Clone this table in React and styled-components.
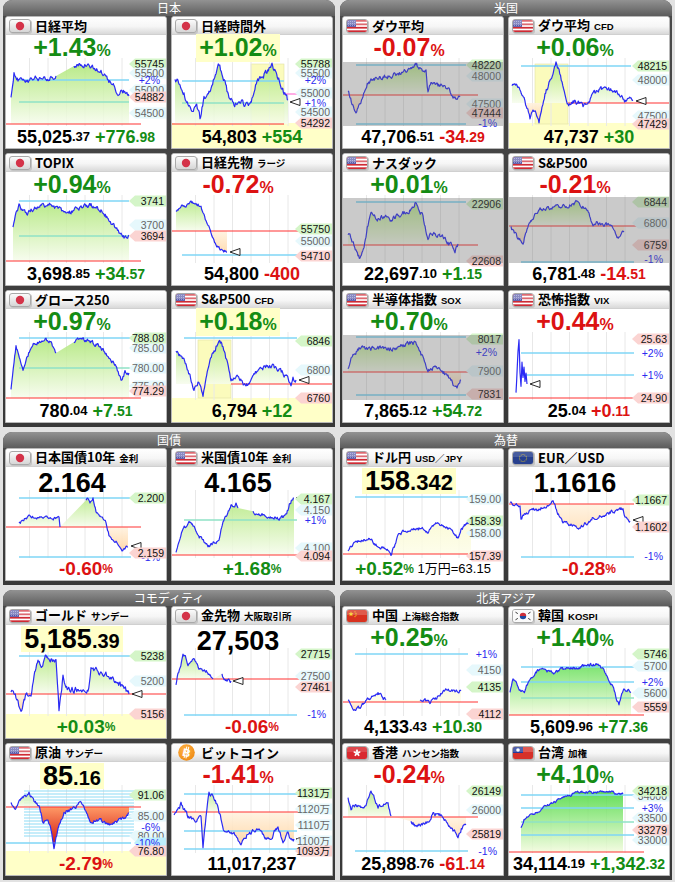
import React, { useMemo } from "react";
import styled, { createGlobalStyle } from "styled-components";

const GlobalStyle = createGlobalStyle`
  body {
    margin: 0;
    background: #e2e2e2;
    font-family: "Liberation Sans", "Noto Sans CJK JP", sans-serif;
  }
`;

const COLORS = { g: "#148c14", r: "#dc1212", k: "#000" };

// label tag styles: h = high, l = low, g = grid value, p = percent, pc = percent on cyan
const TAGS = {
  h: { bg: "#d4f5c8", fg: "#111" },
  l: { bg: "#fbd4d2", fg: "#111" },
  g: { bg: "#e6f8fc", fg: "#666" },
  p: { bg: null, fg: "#2b2bf0" },
  pc: { bg: "#bdeffc", fg: "#2b2bf0" },
};

// t = thin limit lines that sit under the fill
const LINE_COLORS = {
  c: ["#7fd6f6", 1.6],
  m: ["#8fe2c6", 1.4],
  r: ["#ff3333", 1.2],
  k: ["#ff90dc", 1.5],
  t: ["#8edcf6", 1.1],
};

const FILLS = {
  g: { up: ["#a5e468", "#f6fcec"], dn: ["#fff2e0", "#ffcf95"] },
  G: { up: ["#35d52a", "#f2fbdc"], dn: ["#fff2e0", "#ffcf95"] },
  y: { up: ["#f6f6bc", "#fdfde8"], dn: ["#fff2e0", "#ffcf95"] },
  R: { up: ["#a5e468", "#f6fcec"], dn: ["#ff9a66", "#c80000"] },
};

const GRID_X = [23.5, 42, 60.5, 79, 97.5, 116];

const oilLines = Array.from({ length: 16 }, (_, i) => [6 + i * 3, "t", 18, 128]);

const pct = (v, c) => [[v, 25, c], ["%", 16, c]];
const pctSm = (v, c) => [[v, 19, c], ["%", 12, c]];

const japan = [
  {
    flag: "jp", name: "日経平均",
    top: pct("+1.43", "g"),
    bot: [["55,025", 18, "k"], [".37", 13, "k"], [" +776", 18, "g"], [".98", 14, "g"]],
    chart: {
      base: 66, fill: "g", noise: 4,
      lines: [[22, "c", 13, 123], [44, "m", 13, 123], [66, "r", 0, 135]],
      pts: [[5, 39], [8, 15], [12, 22], [20, 24], [30, 20], [40, 21], [50, 18], null, [68, 8], [75, 6], [85, 8], [95, 12], [100, 20], [108, 28], [112, 35], [118, 33], [123, 38]],
      labels: [[6, "55745", "h"], [15, "55500", "g"], [22, "+2%", "p"], [32, "55000", "g"], [39, "54882", "l"], [55, "54500", "g"]],
    },
  },
  {
    flag: "jp", name: "日経時間外", topHl: true, botHl: true,
    top: pct("+1.02", "g"),
    bot: [["54,803", 18, "k"], [" +554", 18, "g"]],
    chart: {
      base: 66, fill: "g", noise: 5, yb: 65, bands: [[79, 112, 6, 66]], mk: [118, 44],
      lines: [[23, "c", 10, 112], [45, "m", 10, 112], [66, "r", 0, 112], [36, "k", 112, 162]],
      pts: [[3, 22], [8, 25], [14, 40], [20, 57], [24, 45], [28, 60], [32, 40], [37, 35], [42, 20], [47, 6], [50, 15], [53, 25], [57, 40], [62, 45], [70, 44], [75, 48], [80, 40], [85, 22], [90, 18], [95, 14], [100, 8], [104, 15], [108, 25], [112, 35], [116, 42]],
      labels: [[6, "55788", "h"], [15, "55500", "g"], [22, "+2%", "p"], [35, "55000", "g"], [45, "+1%", "p"], [54, "54500", "g"], [65, "54292", "l"]],
    },
  },
  {
    flag: "jp", name: "TOPIX",
    top: pct("+0.94", "g"),
    bot: [["3,698", 18, "k"], [".85", 13, "k"], [" +34", 18, "g"], [".57", 14, "g"]],
    chart: {
      base: 66, fill: "g", noise: 4,
      lines: [[6, "c", 13, 123], [41, "m", 13, 123], [66, "r", 0, 135]],
      pts: [[7, 31], [10, 18], [13, 10], [20, 18], [30, 13], [45, 10], [55, 15], [65, 17], [75, 12], [85, 10], [95, 15], [105, 27], [113, 37], [118, 43], [123, 40]],
      labels: [[6, "3741", "h"], [30, "3700", "g"], [41, "3694", "l"]],
    },
  },
  {
    flag: "jp", name: "日経先物", sub: "ラージ",
    top: pct("-0.72", "r"),
    bot: [["54,800", 18, "k"], [" -400", 18, "r"]],
    chart: {
      base: 36, fill: "g", noise: 3, mk: [58, 57],
      lines: [[36, "r", 0, 162], [60, "c", 10, 125]],
      pts: [[4, 17], [9, 12], [14, 10], [19, 8], [24, 7], [29, 12], [34, 27], [39, 37], [44, 50], [49, 55], [55, 57]],
      labels: [[34, "55750", "h"], [46, "55000", "g"], [61, "54710", "l"]],
    },
  },
  {
    flag: "jp", name: "グロース250",
    top: pct("+0.97", "g"),
    bot: [["780", 18, "k"], [".04", 13, "k"], [" +7", 18, "g"], [".51", 14, "g"]],
    chart: {
      base: 66, fill: "g", noise: 3.5,
      lines: [[6, "c", 13, 128], [36, "m", 13, 128], [66, "r", 0, 135]],
      pts: [[5, 58], [8, 30], [10, 15], [14, 25], [17, 38], [20, 28], [24, 18], [28, 11], [35, 10], [40, 8], [45, 10], [50, 21], null, [68, 11], [73, 8], [78, 8], [85, 10], [95, 15], [100, 22], [105, 28], [110, 35], [115, 48], [119, 40], [123, 41]],
      labels: [[16, "785.00", "g"], [36, "780.00", "g"], [54, "775.00", "g"], [6, "788.08", "h"], [59, "774.29", "l"]],
    },
  },
  {
    flag: "us", name: "S&P500", sub: "CFD", topHl: true, botHl: true,
    top: pct("+0.18", "g"),
    bot: [["6,794", 18, "k"], [" +12", 18, "g"]],
    chart: {
      base: 52, fill: "g", noise: 4, yb: 66, bands: [[26, 59, 8, 66]], mk: [127, 48],
      lines: [[6, "c", 12, 125], [52, "r", 59, 162]],
      pts: [[4, 21], [9, 25], [14, 31], [18, 45], [22, 58], [26, 50], [31, 63], [34, 45], [38, 25], [42, 20], [47, 8], [51, 15], [55, 30], [59, 48], [63, 45], [68, 47], [74, 55], [78, 48], [82, 40], [90, 37], [99, 33], [105, 37], [110, 40], [115, 46], [119, 55], [121, 48], [124, 48]],
      labels: [[9, "6846", "h"], [38, "6800", "g"], [66, "6760", "l"]],
    },
  },
];

const usa = [
  {
    flag: "us", name: "ダウ平均",
    top: pct("-0.07", "r"),
    bot: [["47,706", 18, "k"], [".51", 13, "k"], [" -34", 18, "r"], [".29", 14, "r"]],
    chart: {
      base: 37, fill: "g", noise: 4, gray: [4, 68],
      lines: [[7, "c", 13, 123], [66, "c", 13, 123], [37, "r", 0, 135]],
      pts: [[5, 35], [9, 45], [13, 52], [17, 45], [20, 40], [25, 25], [28, 22], [35, 20], [45, 18], [55, 16], [65, 12], [73, 6], [78, 12], [83, 14], [85, 34], [88, 26], [95, 28], [100, 27], [105, 30], [108, 37], [112, 40], [117, 39]],
      labels: [[18, "48000", "g"], [46, "47500", "g"], [7, "48220", "h"], [55, "47444", "l"], [65, "-1%", "p"]],
    },
  },
  {
    flag: "us", name: "ダウ平均", sub: "CFD", botHl: true,
    top: pct("+0.06", "g"),
    bot: [["47,737", 18, "k"], [" +30", 18, "g"]],
    chart: {
      base: 45, fill: "g", noise: 4, yb: 65, bands: [[26, 59, 6, 66]], mk: [127, 43],
      lines: [[8, "c", 12, 122], [45, "r", 59, 162]],
      pts: [[3, 29], [8, 28], [13, 35], [18, 50], [21, 60], [24, 50], [27, 55], [30, 66], [33, 50], [36, 35], [40, 25], [44, 18], [47, 6], [50, 12], [53, 25], [56, 40], [59, 47], [64, 43], [70, 45], [74, 48], [80, 42], [86, 35], [92, 32], [99, 30], [105, 33], [112, 38], [117, 44], [120, 42], [124, 42]],
      labels: [[22, "48000", "g"], [58, "47500", "g"], [8, "48215", "h"], [66, "47429", "l"]],
    },
  },
  {
    flag: "us", name: "ナスダック",
    top: pct("+0.01", "g"),
    bot: [["22,697", 18, "k"], [".10", 13, "k"], [" +1", 18, "g"], [".15", 14, "g"]],
    chart: {
      base: 50, fill: "g", noise: 4, gray: [3, 68],
      lines: [[7, "c", 13, 123], [50, "r", 0, 135]],
      pts: [[5, 38], [9, 45], [13, 55], [17, 65], [21, 50], [25, 30], [28, 20], [35, 24], [42, 22], [48, 25], [55, 20], [62, 18], [68, 14], [72, 8], [76, 15], [80, 22], [85, 45], [88, 38], [95, 40], [100, 42], [105, 48], [110, 52], [112, 56], [115, 49]],
      labels: [[9, "22906", "h"], [66, "22608", "l"]],
    },
  },
  {
    flag: "us", name: "S&P500",
    top: pct("-0.21", "r"),
    bot: [["6,781", 18, "k"], [".48", 13, "k"], [" -14", 18, "r"], [".51", 14, "r"]],
    chart: {
      base: 31, fill: "g", noise: 3.5, gray: [2, 68],
      lines: [[31, "r", 0, 162], [67, "c", 12, 125]],
      pts: [[2, 33], [6, 38], [10, 45], [14, 48], [18, 35], [21, 27], [25, 20], [29, 15], [40, 14], [50, 12], [60, 10], [69, 7], [75, 12], [80, 18], [84, 32], [88, 28], [95, 30], [102, 30], [105, 35], [108, 42], [112, 40], [115, 37]],
      labels: [[28, "6800", "g"], [7, "6844", "h"], [50, "6759", "l"], [64, "-1%", "p"]],
    },
  },
  {
    flag: "us", name: "半導体指数", sub: "SOX",
    top: pct("+0.70", "g"),
    bot: [["7,865", 18, "k"], [".12", 13, "k"], [" +54", 18, "g"], [".72", 14, "g"]],
    chart: {
      base: 40, fill: "g", noise: 4, gray: [3, 68],
      lines: [[5, "c", 13, 123], [40, "r", 0, 135], [63, "c", 13, 123]],
      pts: [[5, 35], [8, 28], [12, 20], [18, 16], [25, 18], [32, 15], [40, 17], [50, 16], [60, 13], [68, 10], [72, 12], [78, 22], [85, 38], [92, 34], [98, 38], [105, 45], [110, 52], [114, 55], [118, 48]],
      labels: [[39, "7900", "g"], [20, "+2%", "p"], [7, "8017", "h"], [62, "7831", "l"]],
    },
  },
  {
    flag: "us", name: "恐怖指数", sub: "VIX",
    top: pct("+0.44", "r"),
    bot: [["25", 18, "k"], [".04", 13, "k"], [" +0", 18, "r"], [".11", 14, "r"]],
    chart: {
      base: 66, fill: "none", noise: 2, mk: [21, 52],
      lines: [[21, "c", 12, 125], [43, "c", 12, 125], [66, "r", 0, 162]],
      pts: [[7, 60], [9, 20], [10, 8], [11, 40], [12, 55], [13, 30], [14, 45], [15, 35], [16, 50], [17, 42], [18, 52]],
      labels: [[21, "+2%", "p"], [43, "+1%", "p"], [7, "25.63", "l"], [66, "24.90", "l"]],
    },
  },
];

const bonds = [
  {
    flag: "jp", name: "日本国債10年", sub: "金利",
    top: [["2.164", 27, "k"]],
    bot: pctSm("-0.60", "r"),
    chart: {
      base: 37, fill: "g", noise: 2.5, mk: [125, 56],
      lines: [[8, "c", 13, 125], [37, "r", 0, 135], [67, "c", 13, 125]],
      pts: [[13, 33], [17, 30], [22, 27], [25, 26], [30, 28], [38, 28], [45, 29], [53, 28], [54, 37], null, [80, 10], [82, 8], [84, 12], [87, 8], [90, 22], [95, 27], [100, 32], [103, 45], [107, 50], [110, 52], [113, 58], [116, 60], [120, 57], [122, 57]],
      labels: [[67, "-1%", "p"], [8, "2.200", "h"], [63, "2.159", "l"]],
    },
  },
  {
    flag: "us", name: "米国債10年", sub: "金利",
    top: [["4.165", 27, "k"]],
    bot: pctSm("+1.68", "g"),
    chart: {
      base: 65, fill: "g", noise: 3, mk: [124, 8],
      lines: [[30, "m", 12, 125], [65, "r", 0, 162]],
      pts: [[4, 63], [8, 50], [11, 38], [15, 35], [19, 31], [23, 38], [26, 44], [30, 50], [36, 56], [42, 53], [47, 51], [49, 40], [51, 31], [55, 25], [59, 16], [62, 15], [64, 13], [66, 18], null, [81, 22], [86, 24], [92, 25], [97, 29], [102, 27], [106, 28], [110, 27], [114, 25], [116, 20], [118, 13], [122, 8]],
      labels: [[20, "4.150", "g"], [58, "4.100", "g"], [30, "+1%", "p"], [9, "4.167", "h"], [66, "4.094", "l"]],
    },
  },
];

const fx = [
  {
    flag: "us", name: "ドル円", sub: "USD／JPY", topHl: true,
    top: [["158", 27, "k"], [".342", 22, "k"]],
    bot: [["+0.52", 19, "g"], ["%", 12, "g"], [" 1万円=63.15", 13, "k", 400]],
    chart: {
      base: 64, fill: "y", noise: 3, mk: [127, 30],
      lines: [[7, "c", 12, 125], [64, "r", 0, 125]],
      pts: [[5, 60], [10, 54], [15, 51], [20, 50], [25, 48], [30, 52], [35, 56], [40, 58], [45, 60], [48, 64], [52, 55], [55, 44], [60, 42], [65, 41], [72, 40], [78, 38], [82, 39], [85, 44], [88, 38], [92, 33], [98, 35], [105, 38], [110, 42], [115, 49], [118, 40], [122, 35], [125, 33], [128, 30]],
      labels: [[9, "159.00", "g"], [43, "158.00", "g"], [31, "158.39", "h"], [66, "157.39", "l"]],
    },
  },
  {
    flag: "eu", name: "EUR／USD",
    top: [["1.1616", 27, "k"]],
    bot: pctSm("-0.28", "r"),
    chart: {
      base: 14, fill: "g", noise: 3, mk: [124, 30],
      lines: [[14, "r", 0, 125], [67, "c", 12, 125]],
      pts: [[1, 14], [6, 15], [11, 17], [12, 29], [16, 25], [21, 20], [28, 20], [34, 17], [40, 15], [44, 9], [48, 22], [54, 32], [62, 35], [71, 37], [78, 33], [84, 28], [92, 26], [104, 21], [110, 20], [114, 18], [116, 28], [121, 31]],
      labels: [[10, "1.1667", "h"], [37, "1.1602", "l"], [66, "-1%", "p"]],
    },
  },
];

const commodity = [
  {
    flag: "us", name: "ゴールド", sub: "サンデー", topHl: true, botHl: true,
    top: [["5,185", 27, "k"], [".39", 20, "k"]],
    bot: pctSm("+0.03", "g"),
    chart: {
      base: 46, fill: "g", noise: 5, yb: 66, mk: [126, 46],
      lines: [[8, "c", 13, 125], [46, "r", 0, 162]],
      pts: [[5, 43], [8, 45], [12, 55], [15, 66], [18, 50], [22, 45], [25, 49], [28, 30], [32, 13], [36, 20], [40, 8], [45, 12], [50, 10], [53, 62], [57, 30], [62, 40], [68, 42], [75, 40], [82, 43], [85, 20], [92, 23], [102, 27], [108, 32], [112, 35], [118, 40], [123, 46]],
      labels: [[33, "5200", "g"], [8, "5238", "h"], [66, "5156", "l"]],
    },
  },
  {
    flag: "jp", name: "金先物", sub: "大阪取引所",
    top: [["27,503", 27, "k"]],
    bot: pctSm("-0.06", "r"),
    chart: {
      base: 31, fill: "g", noise: 3, mk: [61, 33],
      lines: [[31, "r", 0, 162], [67, "c", 12, 125]],
      pts: [[4, 38], [6, 25], [8, 20], [11, 7], [14, 10], [16, 15], [21, 10], [25, 18], [29, 23], [33, 22], [37, 25], [41, 31], null, [50, 26], [52, 33], [55, 32], [59, 33]],
      labels: [[28, "27500", "g"], [6, "27715", "h"], [39, "27461", "l"], [66, "-1%", "p"]],
    },
  },
  {
    flag: "us", name: "原油", sub: "サンデー", topHl: true, botHl: true,
    top: [["85", 27, "k"], [".16", 20, "k"]],
    bot: pctSm("-2.79", "r"),
    chart: {
      base: 22, fill: "R", noise: 3, yb: 66, mk: [125, 30],
      lines: [...oilLines, [22, "r", 0, 135], [58, "c", 0, 125]],
      pts: [[5, 18], [10, 23], [15, 13], [20, 12], [23, 8], [28, 16], [33, 21], [37, 38], [42, 34], [45, 45], [48, 64], [52, 44], [55, 35], [58, 27], [63, 25], [67, 22], [72, 20], [75, 17], [78, 22], [80, 28], [85, 38], [90, 35], [95, 35], [100, 38], [105, 40], [110, 37], [113, 35], [118, 33], [123, 28]],
      labels: [[31, "85.00", "g"], [51, "80.00", "g"], [42, "-6%", "p"], [58, "-10%", "pc"], [10, "91.06", "h"], [66, "76.80", "l"]],
    },
  },
  {
    flag: "btc", name: "ビットコイン",
    top: pct("-1.41", "r"),
    bot: [["11,017,237", 18, "k"]],
    chart: {
      base: 27, fill: "g", noise: 4, mk: [124, 54],
      lines: [[9, "c", 12, 125], [27, "r", 0, 135], [46, "c", 12, 125], [64, "c", 12, 125]],
      pts: [[2, 29], [9, 19], [16, 31], [24, 39], [29, 32], [31, 63], [34, 34], [37, 7], [42, 12], [47, 27], [52, 44], [62, 48], [69, 58], [77, 48], [87, 44], [96, 54], [101, 50], [106, 41], [111, 58], [116, 49], [122, 54]],
      labels: [[24, "1120万", "g"], [40, "1110万", "g"], [56, "1100万", "g"], [8, "1131万", "h"], [66, "1093万", "l"]],
    },
  },
];

const asia = [
  {
    flag: "cn", name: "中国", sub: "上海総合指数",
    top: pct("+0.25", "g"),
    bot: [["4,133", 18, "k"], [".43", 13, "k"], [" +10", 18, "g"], [".30", 14, "g"]],
    chart: {
      base: 54, fill: "y", noise: 3,
      lines: [[6, "c", 12, 125], [54, "r", 0, 135]],
      pts: [[5, 53], [9, 58], [12, 63], [16, 60], [20, 56], [24, 52], [28, 49], [32, 47], [35, 45], [39, 49], [43, 52], null, [77, 51], [82, 52], [87, 54], [91, 52], [95, 49], [99, 45], [102, 42], [106, 43], [110, 42], [114, 43], [118, 42]],
      labels: [[22, "4150", "g"], [6, "+1%", "p"], [39, "4135", "h"], [66, "4112", "l"]],
    },
  },
  {
    flag: "kr", name: "韓国", sub: "KOSPI",
    top: pct("+1.40", "g"),
    bot: [["5,609", 18, "k"], [".96", 13, "k"], [" +77", 18, "g"], [".36", 14, "g"]],
    chart: {
      base: 67, fill: "G", noise: 3,
      lines: [[19, "c", 12, 125], [34, "c", 12, 125], [50, "m", 12, 125], [67, "r", 0, 135]],
      pts: [[1, 43], [4, 30], [7, 35], [9, 40], [13, 42], [16, 43], [19, 35], [21, 30], [26, 25], [32, 21], [38, 23], [44, 25], [52, 22], [61, 20], [70, 19], [77, 18], [83, 17], [87, 16], [91, 18], [94, 21], [98, 28], [101, 33], [104, 40], [106, 45], [108, 52], [110, 58], [112, 48], [115, 40], [118, 42], [122, 44]],
      labels: [[18, "5700", "g"], [45, "5600", "g"], [34, "+2%", "p"], [6, "5746", "h"], [59, "5559", "l"]],
    },
  },
  {
    flag: "hk", name: "香港", sub: "ハンセン指数",
    top: pct("-0.24", "r"),
    bot: [["25,898", 18, "k"], [".76", 13, "k"], [" -61", 18, "r"], [".14", 14, "r"]],
    chart: {
      base: 32, fill: "g", noise: 3.5,
      lines: [[32, "r", 0, 135], [66, "c", 12, 125]],
      pts: [[5, 13], [8, 26], [10, 20], [13, 19], [17, 23], [21, 21], [25, 15], [28, 8], [32, 15], [35, 21], [40, 20], [45, 19], [48, 31], null, [68, 35], [72, 41], [78, 40], [85, 38], [88, 32], [90, 28], [94, 30], [98, 31], [102, 35], [105, 39], [110, 45], [115, 51], [119, 43], [123, 39]],
      labels: [[25, "26000", "g"], [6, "26149", "h"], [49, "25819", "l"], [66, "-1%", "p"]],
    },
  },
  {
    flag: "tw", name: "台湾", sub: "加権",
    top: pct("+4.10", "g"),
    bot: [["34,114", 18, "k"], [".19", 13, "k"], [" +1,342", 18, "g"], [".32", 14, "g"]],
    chart: {
      base: 67, fill: "G", noise: 2,
      lines: [[10, "c", 12, 125], [23, "c", 12, 125], [37, "m", 12, 125], [50, "c", 12, 125], [67, "r", 0, 135]],
      pts: [[12, 42], [15, 35], [20, 30], [25, 28], [31, 27], [35, 22], [40, 20], [48, 16], [55, 12], [62, 10], [67, 6], [75, 7], [89, 7], [104, 6], [106, 9], [114, 9]],
      labels: [[11, "34000", "g"], [33, "33500", "g"], [55, "33000", "g"], [23, "+3%", "p"], [6, "34218", "h"], [45, "33279", "l"]],
    },
  },
];

const sections = [
  { title: "日本", tiles: japan },
  { title: "米国", tiles: usa },
  { title: "国債", tiles: bonds },
  { title: "為替", tiles: fx },
  { title: "コモディティ", tiles: commodity },
  { title: "北東アジア", tiles: asia },
];

function mulberry32(a) {
  return function () {
    a |= 0;
    a = (a + 0x6d2b79f5) | 0;
    let t = Math.imul(a ^ (a >>> 15), 1 | a);
    t = (t + Math.imul(t ^ (t >>> 7), 61 | t)) ^ t;
    return ((t ^ (t >>> 14)) >>> 0) / 4294967296;
  };
}

// turn anchor points into a jagged intraday line, split where the market paused
function buildSeries(pts, noise, seed) {
  const rnd = mulberry32(seed);
  const segs = [];
  let cur = [];
  pts.forEach((p) => {
    if (p === null) {
      if (cur.length) segs.push(cur);
      cur = [];
    } else cur.push(p);
  });
  if (cur.length) segs.push(cur);
  return segs.map((seg) => {
    const out = [];
    let n = 0;
    for (let i = 0; i < seg.length - 1; i++) {
      const [x0, y0] = seg[i];
      const [x1, y1] = seg[i + 1];
      const steps = Math.max(1, Math.round((x1 - x0) / 0.7));
      for (let s = 0; s < steps; s++) {
        const t = s / steps;
        n = n * 0.55 + (rnd() - 0.5) * noise;
        const y = Math.min(67.5, Math.max(0.5, y0 + (y1 - y0) * t + n));
        out.push([x0 + (x1 - x0) * t, y]);
      }
    }
    out.push(seg[seg.length - 1]);
    return out;
  });
}

const f = (v) => v.toFixed(1);

const Page = styled.div`
  display: grid;
  grid-template-columns: 1fr 1fr;
  column-gap: 5px;
  row-gap: 5px;
  padding: 0 3px;
`;

const Section = styled.section`
  background: linear-gradient(#4a4a4a, #383838);
  border-radius: 9px 9px 0 0;
  padding: 0 2px 4px;
`;

const SectionTitle = styled.div`
  height: 16px;
  margin: 0 -2px;
  border-radius: 9px 9px 0 0;
  background: linear-gradient(#929292, #5c5c5c);
  color: #fff;
  font-family: "Noto Sans CJK JP", sans-serif;
  font-size: 12px;
  line-height: 15px;
  text-align: center;
`;

const TileGrid = styled.div`
  display: grid;
  grid-template-columns: 1fr 1fr;
  gap: 4px;
`;

const Tile = styled.div`
  height: 133px;
  box-sizing: border-box;
  display: flex;
  flex-direction: column;
  background: #fff;
  border: 1px solid #b8b8b8;
  border-radius: 3px 3px 0 0;
  overflow: hidden;
`;

const TileHead = styled.div`
  flex: none;
  height: 18px;
  box-sizing: border-box;
  display: flex;
  align-items: center;
  gap: 4px;
  padding-left: 3px;
  background: linear-gradient(#ffffff 0%, #f6f6f6 55%, #d9d9d9 100%);
  border-bottom: 1px solid #d0d0d0;
`;

const FlagBox = styled.span`
  flex: none;
  width: 22px;
  height: 14px;
  box-sizing: border-box;
  border: 1px solid #a9a9a9;
  border-radius: 3px;
  overflow: hidden;
  background: linear-gradient(#fbfbfb, #d6d6d6);
  box-shadow: 1px 1px 0 #c4c4c4;
  svg {
    display: block;
  }
`;

const CoinBox = styled.span`
  flex: none;
  width: 22px;
  height: 17px;
  display: flex;
  justify-content: center;
  align-items: center;
`;

const Name = styled.span`
  font-family: "Noto Sans CJK JP", sans-serif;
  font-weight: 700;
  font-size: 13px;
  line-height: 17px;
  color: #000;
  white-space: nowrap;
`;

const Sub = styled.span`
  margin-left: 4px;
  font-family: "Liberation Sans", "Noto Sans CJK JP", sans-serif;
  font-weight: 700;
  font-size: 9.5px;
`;

const TopRow = styled.div`
  flex: none;
  position: relative;
  z-index: 2;
  height: 23px;
  display: flex;
  align-items: flex-end;
  justify-content: center;
  padding-right: 28px;
`;

const TopValue = styled.span`
  display: block;
  font-size: ${(p) => p.$size}px;
  line-height: 20px;
  margin-bottom: -4px;
  padding: 3px 3px 1px;
  background: ${(p) => (p.$hl ? "#ffffc8" : "transparent")};
  white-space: nowrap;
`;

const Num = styled.span`
  font-family: "Liberation Sans", "Noto Sans CJK JP", sans-serif;
  font-weight: ${(p) => p.$w || 700};
  font-size: ${(p) => p.$size}px;
  color: ${(p) => COLORS[p.$color]};
  white-space: pre;
`;

const BottomRow = styled.div`
  flex: none;
  height: 22px;
  display: flex;
  align-items: center;
  justify-content: center;
  line-height: 22px;
  white-space: nowrap;
  background: ${(p) => (p.$hl ? "#ffffc8" : "transparent")};
`;

const ChartSvg = styled.svg`
  display: block;
  flex: none;
  position: relative;
  z-index: 1;
  overflow: visible;
  width: 100%;
  height: 68px;
  text {
    font-family: "Liberation Sans", "Noto Sans CJK JP", sans-serif;
    font-size: 10.5px;
  }
`;

function Flag({ kind }) {
  if (kind === "btc") {
    return (
      <CoinBox>
        <svg width="17" height="17" viewBox="0 0 17 17">
          <defs>
            <radialGradient id="btcg" cx="40%" cy="35%" r="70%">
              <stop offset="0" stopColor="#ffb347" />
              <stop offset="1" stopColor="#ee8a12" />
            </radialGradient>
          </defs>
          <circle cx="8.5" cy="8.5" r="8.3" fill="url(#btcg)" />
          <g transform="rotate(14 8.5 8.5)">
            <line x1="7.4" y1="2.6" x2="7.4" y2="14.4" stroke="#fff" strokeWidth="1" />
            <line x1="9.4" y1="2.6" x2="9.4" y2="14.4" stroke="#fff" strokeWidth="1" />
            <text x="8.6" y="12.6" textAnchor="middle" fill="#fff" fontSize="11" fontWeight="700" fontFamily="Liberation Sans, sans-serif">B</text>
          </g>
        </svg>
      </CoinBox>
    );
  }
  let body = null;
  if (kind === "jp") {
    body = <circle cx="10" cy="6" r="4.2" fill="#d43349" />;
  } else if (kind === "us") {
    body = (
      <>
        <rect width="20" height="12" fill="#fff" />
        {[0, 2, 4, 6].map((i) => (
          <rect key={i} y={i * 1.72} width="20" height="1.72" fill="#cf2a34" />
        ))}
        <rect width="9" height="6.9" fill="#5658a8" />
        {[1.5, 3.5, 5.5].map((y) =>
          [1.5, 3.5, 5.5, 7.5].map((x) => <circle key={`${x}-${y}`} cx={x} cy={y} r="0.45" fill="#d8dcff" />)
        )}
        <rect width="20" height="5" fill="#fff" opacity="0.3" />
      </>
    );
  } else if (kind === "eu") {
    body = (
      <>
        <rect width="20" height="12" fill="#27408e" />
        {Array.from({ length: 12 }, (_, i) => {
          const a = (i / 12) * Math.PI * 2;
          return <circle key={i} cx={10 + Math.cos(a) * 3.6} cy={6 + Math.sin(a) * 3.6} r="0.5" fill="#e8c820" />;
        })}
        <rect width="20" height="5" fill="#fff" opacity="0.15" />
      </>
    );
  } else if (kind === "cn") {
    body = (
      <>
        <rect width="20" height="12" fill="#d8321f" />
        <polygon points="4,1.3 4.7,3.2 6.6,3.2 5.1,4.4 5.6,6.3 4,5.2 2.4,6.3 2.9,4.4 1.4,3.2 3.3,3.2" fill="#f7d417" />
        <circle cx="8" cy="1.8" r="0.6" fill="#f7d417" />
        <circle cx="9" cy="3.3" r="0.6" fill="#f7d417" />
        <circle cx="9" cy="5.2" r="0.6" fill="#f7d417" />
        <circle cx="8" cy="6.6" r="0.6" fill="#f7d417" />
        <rect width="20" height="5" fill="#fff" opacity="0.2" />
      </>
    );
  } else if (kind === "kr") {
    body = (
      <>
        <rect width="20" height="12" fill="#fafafa" />
        <path d="M6.8,6 A3.2,3.2 0 0 1 13.2,6 Z" fill="#cd2e3a" />
        <path d="M6.8,6 A3.2,3.2 0 0 0 13.2,6 Z" fill="#1d4aa0" />
        <g stroke="#222" strokeWidth="0.9">
          <line x1="2.5" y1="2.2" x2="4.8" y2="3.6" />
          <line x1="15.2" y1="3.6" x2="17.5" y2="2.2" />
          <line x1="2.5" y1="9.8" x2="4.8" y2="8.4" />
          <line x1="15.2" y1="8.4" x2="17.5" y2="9.8" />
        </g>
      </>
    );
  } else if (kind === "hk") {
    body = (
      <>
        <rect width="20" height="12" fill="#d92a30" />
        {[0, 72, 144, 216, 288].map((r) => (
          <ellipse key={r} cx="10" cy="4.1" rx="1" ry="1.9" fill="#fff" transform={`rotate(${r} 10 6)`} />
        ))}
        <rect width="20" height="5" fill="#fff" opacity="0.15" />
      </>
    );
  } else if (kind === "tw") {
    body = (
      <>
        <rect width="20" height="12" fill="#d63028" />
        <rect width="10" height="6" fill="#223b9a" />
        <circle cx="5" cy="3" r="1.8" fill="#fff" />
        <rect width="20" height="5" fill="#fff" opacity="0.2" />
      </>
    );
  }
  return (
    <FlagBox>
      <svg width="20" height="12" viewBox="0 0 20 12">
        {body}
      </svg>
    </FlagBox>
  );
}

function HLine({ l }) {
  const [y, k, x0, x1] = l;
  return <line x1={x0} y1={y} x2={x1} y2={y} stroke={LINE_COLORS[k][0]} strokeWidth={LINE_COLORS[k][1]} />;
}

function Chart({ c, id }) {
  const segs = useMemo(() => buildSeries(c.pts, c.noise, id * 7919 + 13), [c, id]);
  const all = segs.flat();
  const first = all[0];
  const last = all[all.length - 1];
  const area =
    `M${f(first[0])},${c.base} ` +
    all.map(([x, y]) => `L${f(x)},${f(y)}`).join(" ") +
    ` L${f(last[0])},${c.base} Z`;
  const stroke = segs
    .map((s) => s.map(([x, y], i) => `${i ? "L" : "M"}${f(x)},${f(y)}`).join(" "))
    .join(" ");
  const fill = FILLS[c.fill];
  const upId = `up${id}`;
  const dnId = `dn${id}`;
  const caId = `ca${id}`;
  const cbId = `cb${id}`;
  const under = c.lines.filter((l) => l[1] === "t");
  const over = c.lines.filter((l) => l[1] !== "t");

  return (
    <ChartSvg viewBox="0 0 160 68" preserveAspectRatio="none">
      {fill && (
        <defs>
          <linearGradient id={upId} gradientUnits="userSpaceOnUse" x1="0" y1="0" x2="0" y2={c.base}>
            <stop offset="0" stopColor={fill.up[0]} />
            <stop offset="1" stopColor={fill.up[1]} />
          </linearGradient>
          <linearGradient id={dnId} gradientUnits="userSpaceOnUse" x1="0" y1={c.base} x2="0" y2="66">
            <stop offset="0" stopColor={fill.dn[0]} />
            <stop offset="1" stopColor={fill.dn[1]} />
          </linearGradient>
          <clipPath id={caId}>
            <rect x="0" y="0" width="160" height={c.base} />
          </clipPath>
          <clipPath id={cbId}>
            <rect x="0" y={c.base} width="160" height={68 - c.base} />
          </clipPath>
        </defs>
      )}
      {c.yb != null && <rect x="0" y={c.yb} width="160" height={68 - c.yb} fill="#ffffc8" />}
      {(c.bands || []).map(([x0, x1, y0, y1], i) => (
        <rect key={i} x={x0} y={y0} width={x1 - x0} height={y1 - y0} fill="#fbfbbc" stroke="#e2e2a4" strokeWidth="0.6" />
      ))}
      {GRID_X.map((x) => (
        <line key={x} x1={x} y1="0" x2={x} y2="68" stroke="#e8e8e8" strokeWidth="1" />
      ))}
      {under.map((l, i) => (
        <HLine key={`u${i}`} l={l} />
      ))}
      {fill && (
        <>
          <path d={area} fill={`url(#${upId})`} fillOpacity="0.85" clipPath={`url(#${caId})`} />
          <path d={area} fill={`url(#${dnId})`} fillOpacity={c.fill === "R" ? 1 : 0.9} clipPath={`url(#${cbId})`} />
        </>
      )}
      {over.map((l, i) => (
        <HLine key={`o${i}`} l={l} />
      ))}
      <path d={stroke} fill="none" stroke="#2a2af5" strokeWidth="1.2" strokeLinejoin="round" />
      {c.mk && (
        <path
          d={`M${c.mk[0]},${c.mk[1]} L${c.mk[0] + 10},${c.mk[1] - 3.5} L${c.mk[0] + 10},${c.mk[1] + 3.5} Z`}
          fill="#fff"
          stroke="#111"
          strokeWidth="0.9"
        />
      )}
      {c.labels.map(([y, text, k], i) => {
        const s = TAGS[k];
        const isPct = k === "p" || k === "pc";
        return (
          <g key={i}>
            {s.bg && (
              <path
                d={`M${isPct ? 128 : 123},${y} L${isPct ? 133 : 129},${y - 5.5} L160,${y - 5.5} L160,${y + 5.5} L${isPct ? 133 : 129},${y + 5.5} Z`}
                fill={s.bg}
              />
            )}
            <text x={isPct ? 154 : 158} y={y} dy="0.36em" textAnchor="end" fill={s.fg}>
              {text}
            </text>
          </g>
        );
      })}
      {c.gray && <rect x="0" y={c.gray[0]} width="160" height={c.gray[1] - c.gray[0]} fill="#666" opacity="0.35" />}
    </ChartSvg>
  );
}

function Parts({ parts }) {
  return parts.map(([t, size, color, w], i) => (
    <Num key={i} $size={size} $color={color} $w={w}>
      {t}
    </Num>
  ));
}

function MarketTile({ t, id }) {
  return (
    <Tile>
      <TileHead>
        <Flag kind={t.flag} />
        <Name>
          {t.name}
          {t.sub && <Sub>{t.sub}</Sub>}
        </Name>
      </TileHead>
      <TopRow>
        <TopValue $hl={t.topHl} $size={t.top[0][1]}>
          <Parts parts={t.top} />
        </TopValue>
      </TopRow>
      <Chart c={t.chart} id={id} />
      <BottomRow $hl={t.botHl}>
        <Parts parts={t.bot} />
      </BottomRow>
    </Tile>
  );
}

export default function App() {
  let n = 0;
  return (
    <>
      <GlobalStyle />
      <Page>
        {sections.map((s) => (
          <Section key={s.title}>
            <SectionTitle>{s.title}</SectionTitle>
            <TileGrid>
              {s.tiles.map((t) => {
                n += 1;
                return <MarketTile key={n} t={t} id={n} />;
              })}
            </TileGrid>
          </Section>
        ))}
      </Page>
    </>
  );
}
